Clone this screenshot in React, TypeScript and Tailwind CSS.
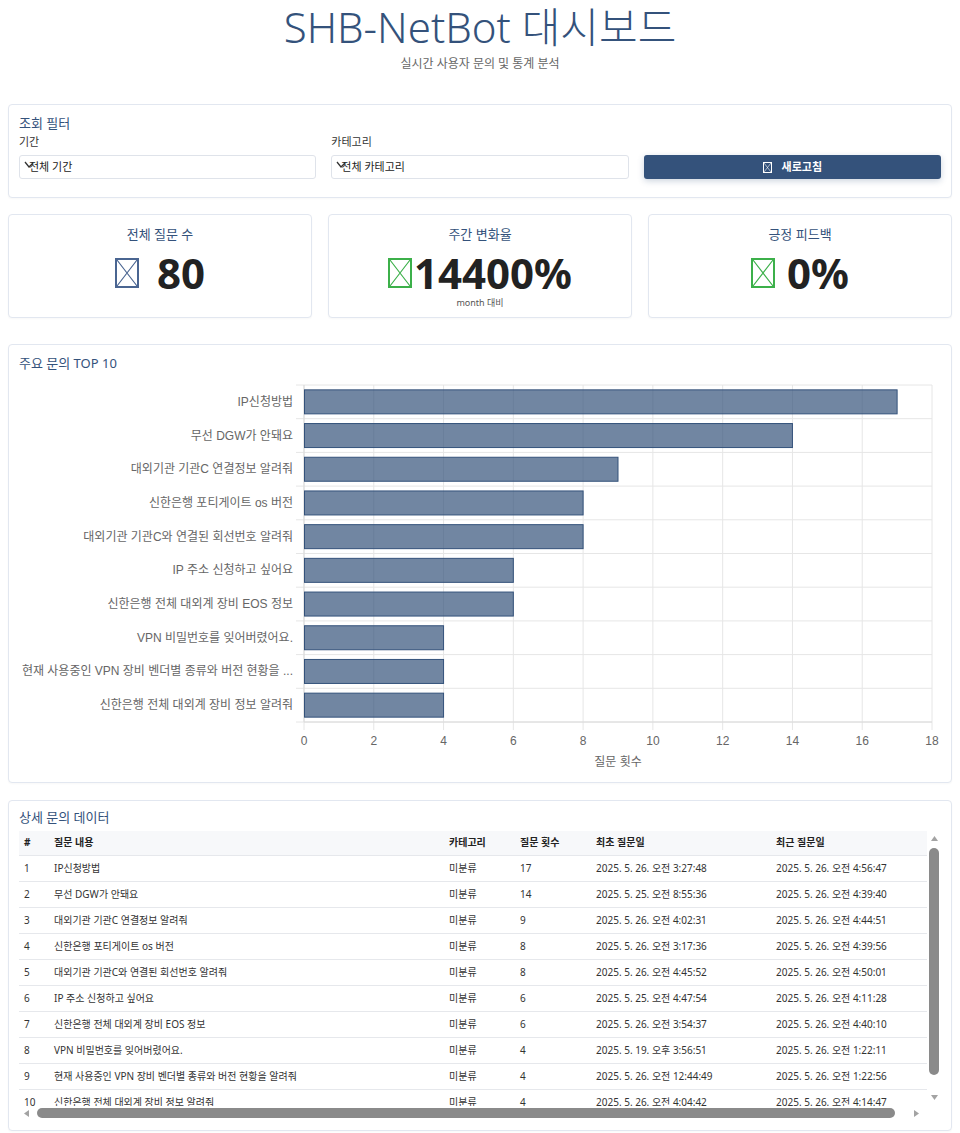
import { ReactNode } from "react";

const topQuestions = [
  { label: "IP신청방법", count: 17 },
  { label: "무선 DGW가 안돼요", count: 14 },
  { label: "대외기관 기관C 연결정보 알려줘", count: 9 },
  { label: "신한은행 포티게이트 os 버전", count: 8 },
  { label: "대외기관 기관C와 연결된 회선번호 알려줘", count: 8 },
  { label: "IP 주소 신청하고 싶어요", count: 6 },
  { label: "신한은행 전체 대외계 장비 EOS 정보", count: 6 },
  { label: "VPN 비밀번호를 잊어버렸어요.", count: 4 },
  { label: "현재 사용중인 VPN 장비 벤더별 종류와 버전 현황을 ...", count: 4 },
  { label: "신한은행 전체 대외계 장비 정보 알려줘", count: 4 },
];

const rows = [
  ["1", "IP신청방법", "미분류", "17", "2025. 5. 26. 오전 3:27:48", "2025. 5. 26. 오전 4:56:47"],
  ["2", "무선 DGW가 안돼요", "미분류", "14", "2025. 5. 25. 오전 8:55:36", "2025. 5. 26. 오전 4:39:40"],
  ["3", "대외기관 기관C 연결정보 알려줘", "미분류", "9", "2025. 5. 26. 오전 4:02:31", "2025. 5. 26. 오전 4:44:51"],
  ["4", "신한은행 포티게이트 os 버전", "미분류", "8", "2025. 5. 26. 오전 3:17:36", "2025. 5. 26. 오전 4:39:56"],
  ["5", "대외기관 기관C와 연결된 회선번호 알려줘", "미분류", "8", "2025. 5. 26. 오전 4:45:52", "2025. 5. 26. 오전 4:50:01"],
  ["6", "IP 주소 신청하고 싶어요", "미분류", "6", "2025. 5. 25. 오전 4:47:54", "2025. 5. 26. 오전 4:11:28"],
  ["7", "신한은행 전체 대외계 장비 EOS 정보", "미분류", "6", "2025. 5. 26. 오전 3:54:37", "2025. 5. 26. 오전 4:40:10"],
  ["8", "VPN 비밀번호를 잊어버렸어요.", "미분류", "4", "2025. 5. 19. 오후 3:56:51", "2025. 5. 26. 오전 1:22:11"],
  ["9", "현재 사용중인 VPN 장비 벤더별 종류와 버전 현황을 알려줘", "미분류", "4", "2025. 5. 26. 오전 12:44:49", "2025. 5. 26. 오전 1:22:56"],
  ["10", "신한은행 전체 대외계 장비 정보 알려줘", "미분류", "4", "2025. 5. 26. 오전 4:04:42", "2025. 5. 26. 오전 4:14:47"],
];

// missing-glyph box, the way the emoji icons render in the original
const BoxIcon = ({ color, w = 24, h = 30, sw = 2 }: { color: string; w?: number; h?: number; sw?: number }) => (
  <svg width={w} height={h} viewBox={`0 0 ${w} ${h}`} className="shrink-0">
    <rect x={sw / 2} y={sw / 2} width={w - sw} height={h - sw} fill="none" stroke={color} strokeWidth={sw} />
    <path d={`M${sw} ${sw} L${w - sw} ${h - sw} M${w - sw} ${sw} L${sw} ${h - sw}`} stroke={color} strokeWidth={sw * 0.6} />
  </svg>
);

const Arrow = ({ dir }: { dir: "up" | "down" | "left" | "right" }) => {
  const d = {
    up: "M0 6 L3.5 1 L7 6 Z",
    down: "M0 1 L3.5 6 L7 1 Z",
    left: "M6 0 L1 3.5 L6 7 Z",
    right: "M1 0 L6 3.5 L1 7 Z",
  }[dir];
  return (
    <svg width="7" height="7" viewBox="0 0 7 7">
      <path d={d} fill="#a3a3a3" />
    </svg>
  );
};

const Card = ({ children, className = "" }: { children: ReactNode; className?: string }) => (
  <div className={`bg-white border border-[#e2e7f0] rounded-[4px] shadow-[0_1px_2px_rgba(0,0,0,0.03)] ${className}`}>{children}</div>
);

const Select = ({ value }: { value: string }) => (
  <div className="relative h-[24px] border border-[#dfe3ea] rounded-[3px] flex items-center pl-[9px] text-[11px] text-[#222]">
    <svg width="10" height="8" viewBox="0 0 10 8" className="absolute left-[4px] top-[5px]">
      <path d="M1 1 L5 6 L9 2" fill="none" stroke="#333" strokeWidth="1.3" />
    </svg>
    <span>{value}</span>
  </div>
);

const StatCard = ({ title, children, note }: { title: string; children: ReactNode; note?: string }) => (
  <Card className="h-[104px] flex flex-col items-center pt-[10px]">
    <div className="text-[13px] leading-[18px] text-[#34527b]">{title}</div>
    <div className="mt-[10px] flex items-center justify-center h-[40px]">{children}</div>
    {note && <div className="mt-[5px] text-[9px] leading-[10px] text-[#555]">{note}</div>}
  </Card>
);

const TopChart = () => {
  const x0 = 295;
  const x1 = 923;
  const top = 13;
  const bottom = 350;
  const unit = (x1 - x0) / 18;
  const band = (bottom - top) / 10;
  const barH = 24;
  const ticks = [0, 2, 4, 6, 8, 10, 12, 14, 16, 18];
  return (
    <svg width="942" height="410" className="block" style={{ fontFamily: "'Liberation Sans', 'Noto Sans CJK KR', sans-serif" }}>
      {ticks.map((t) => (
        <line key={`v${t}`} x1={x0 + t * unit} x2={x0 + t * unit} y1={top} y2={bottom + 8} stroke="#e6e6e6" strokeWidth="1" />
      ))}
      {Array.from({ length: 11 }).map((_, i) => (
        <line key={`h${i}`} x1={x0 - 8} x2={x1} y1={top + i * band} y2={top + i * band} stroke="#e6e6e6" strokeWidth="1" />
      ))}
      <line x1={x0} x2={x0} y1={top} y2={bottom} stroke="#dadada" />
      <line x1={x0} x2={x1} y1={bottom} y2={bottom} stroke="#dadada" />
      {topQuestions.map((q, i) => {
        const cy = top + i * band + band / 2;
        return (
          <g key={q.label}>
            <rect x={x0 + 0.5} y={cy - barH / 2} width={q.count * unit - 0.5} height={barH} fill="rgba(52,82,123,0.7)" stroke="#34527b" strokeWidth="1" />
            <text x={x0 - 11} y={cy + 4} textAnchor="end" fontSize="12" fill="#666">
              {q.label}
            </text>
          </g>
        );
      })}
      {ticks.map((t) => (
        <text key={`t${t}`} x={x0 + t * unit} y={373} textAnchor="middle" fontSize="12" fill="#666">
          {t}
        </text>
      ))}
      <text x={(x0 + x1) / 2} y={394} textAnchor="middle" fontSize="12" fill="#666">
        질문 횟수
      </text>
    </svg>
  );
};

const App = () => {
  return (
    <div className="min-h-screen bg-white px-2 font-['Noto_Sans','Noto_Sans_CJK_KR',sans-serif] text-[#222]">
      <header className="text-center">
        <h1 className="text-[42px] leading-[54px] font-light text-[#34527b]">SHB-NetBot 대시보드</h1>
        <p className="mt-[2px] text-[12px] leading-[16px] text-[#666]">실시간 사용자 문의 및 통계 분석</p>
      </header>

      <Card className="mt-[32px] px-[10px] pt-[9px] pb-[18px]">
        <div className="text-[13px] leading-[18px] text-[#34527b]">조회 필터</div>
        <div className="grid grid-cols-3 gap-[15px]">
          <div>
            <div className="text-[11px] leading-[16px] text-[#333] mt-[2px] mb-[5px]">기간</div>
            <Select value="전체 기간" />
          </div>
          <div>
            <div className="text-[11px] leading-[16px] text-[#333] mt-[2px] mb-[5px]">카테고리</div>
            <Select value="전체 카테고리" />
          </div>
          <div className="flex items-end">
            <button className="w-full h-[24px] rounded-[3px] bg-[#34527b] text-white text-[11px] font-bold flex items-center justify-center gap-[10px] shadow-[0_2px_6px_rgba(52,82,123,0.25)]">
              <BoxIcon color="#ffffff" w={9} h={11} sw={1} />
              <span>새로고침</span>
            </button>
          </div>
        </div>
      </Card>

      <div className="grid grid-cols-3 gap-4 mt-4">
        <StatCard title="전체 질문 수">
          <BoxIcon color="#4a6591" />
          <span className="ml-[18px] text-[42px] font-bold leading-none text-[#222]">80</span>
        </StatCard>
        <StatCard title="주간 변화율" note="month 대비">
          <BoxIcon color="#3cb04a" />
          <span className="ml-[2px] text-[42px] font-bold leading-none text-[#222]">14400%</span>
        </StatCard>
        <StatCard title="긍정 피드백">
          <BoxIcon color="#3cb04a" />
          <span className="ml-[12px] text-[42px] font-bold leading-none text-[#222]">0%</span>
        </StatCard>
      </div>

      <Card className="mt-[26px] pt-[9px]">
        <div className="pl-[10px] text-[13px] leading-[18px] text-[#34527b]">주요 문의 TOP 10</div>
        <TopChart />
      </Card>

      <Card className="mt-[17px] px-[10px] pt-[7px] pb-[10px]">
        <div className="text-[13px] leading-[18px] text-[#34527b] mb-[5px]">상세 문의 데이터</div>
        <div className="grid grid-cols-[1fr_14px] grid-rows-[275px_14px]">
          <div className="overflow-hidden">
            <table className="w-[935px] border-collapse text-[10px] text-[#333] table-fixed">
              <colgroup>
                <col className="w-[30px]" />
                <col className="w-[395px]" />
                <col className="w-[71px]" />
                <col className="w-[76px]" />
                <col className="w-[180px]" />
                <col className="w-[183px]" />
              </colgroup>
              <thead>
                <tr className="bg-[#f7f8fa] h-[24px] border-b border-[#e6e8ec]">
                  {["#", "질문 내용", "카테고리", "질문 횟수", "최초 질문일", "최근 질문일"].map((h) => (
                    <th key={h} className="text-left font-bold text-[#222] px-[5px] whitespace-nowrap">
                      {h}
                    </th>
                  ))}
                </tr>
              </thead>
              <tbody>
                {rows.map((r) => (
                  <tr key={r[0]} className="h-[26px] border-b border-[#e6e8ec]">
                    {r.map((c, i) => (
                      <td key={i} className="px-[5px] whitespace-nowrap">
                        {c}
                      </td>
                    ))}
                  </tr>
                ))}
              </tbody>
            </table>
          </div>
          {/* vertical scrollbar */}
          <div className="flex flex-col items-center">
            <div className="h-[14px] flex items-center justify-center">
              <Arrow dir="up" />
            </div>
            <div className="mt-[3px] h-[227px] w-[10px] rounded-full bg-[#8a8a8a]" />
            <div className="flex-1" />
            <div className="h-[14px] flex items-center justify-center mb-[2px]">
              <Arrow dir="down" />
            </div>
          </div>
          {/* horizontal scrollbar */}
          <div className="flex items-center">
            <div className="w-[14px] flex items-center justify-center">
              <Arrow dir="left" />
            </div>
            <div className="ml-[4px] w-[858px] h-[10px] rounded-full bg-[#8a8a8a]" />
            <div className="flex-1" />
            <div className="w-[14px] flex items-center justify-center mr-[4px]">
              <Arrow dir="right" />
            </div>
          </div>
          <div />
        </div>
      </Card>
    </div>
  );
};

export default App;
